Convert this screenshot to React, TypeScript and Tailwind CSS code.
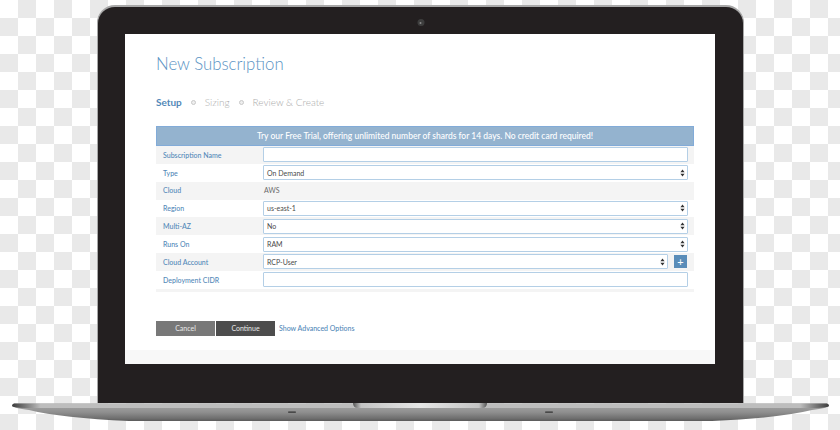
const ROWS = [
  { label: "Subscription Name", kind: "input" },
  { label: "Type", kind: "select", value: "On Demand" },
  { label: "Cloud", kind: "text", value: "AWS" },
  { label: "Region", kind: "select", value: "us-east-1" },
  { label: "Multi-AZ", kind: "select", value: "No" },
  { label: "Runs On", kind: "select", value: "RAM" },
  { label: "Cloud Account", kind: "add", value: "RCP-User" },
  { label: "Deployment CIDR", kind: "input" },
];

function Arrows() {
  return (
    <svg width="5" height="8" viewBox="0 0 5 8" className="shrink-0">
      <path d="M2.5 0.5 L4.6 3.2 H0.4 Z M2.5 7.5 L0.4 4.8 H4.6 Z" fill="#333" />
    </svg>
  );
}

function SelectBox({ value }: { value?: string }) {
  return (
    <div className="flex h-[15px] min-w-0 flex-1 items-center justify-between rounded-[1px] border border-[#b4cfe6] bg-white pl-[3px] pr-[2px] text-[#4a4a4a]">
      <span>{value}</span>
      <Arrows />
    </div>
  );
}

function Row({ row, index }: { row: (typeof ROWS)[number]; index: number }) {
  const even = index % 2 === 0;
  return (
    <div className={`flex h-[17.85px] items-center ${even ? "bg-[#f4f4f4]" : "bg-white"}`}>
      <div className="w-[107px] pl-[7px] text-[7px] font-medium text-[#5288b8]">{row.label}</div>
      <div className="flex w-[425px] items-center text-[7px]">
        {row.kind === "input" && (
          <input className="h-[15px] w-full rounded-[1px] border border-[#b4cfe6] bg-white" aria-label={row.label} />
        )}
        {row.kind === "select" && <SelectBox value={row.value} />}
        {row.kind === "text" && <span className="pl-[1px] text-[#6b6b6b]">{row.value}</span>}
        {row.kind === "add" && (
          <>
            <SelectBox value={row.value} />
            <div className="ml-[6px] mr-[1px] flex h-[13px] w-[13px] shrink-0 items-center justify-center bg-[#5a8db9] text-[11px] leading-none text-white">
              +
            </div>
          </>
        )}
      </div>
    </div>
  );
}

function Base() {
  return (
    <svg width="817" height="18" viewBox="0 0 817 18" className="block">
      <defs>
        <linearGradient id="body" x1="0" y1="0" x2="0" y2="1">
          <stop offset="0" stopColor="#a8a8a8" />
          <stop offset="0.5" stopColor="#8f8f8f" />
          <stop offset="0.85" stopColor="#6f6f6f" />
          <stop offset="1" stopColor="#5a5a5a" />
        </linearGradient>
        <linearGradient id="rim" x1="0" y1="0" x2="1" y2="0">
          <stop offset="0" stopColor="#3c3c3c" />
          <stop offset="0.035" stopColor="#bdbdbd" />
          <stop offset="0.965" stopColor="#bdbdbd" />
          <stop offset="1" stopColor="#3c3c3c" />
        </linearGradient>
        <linearGradient id="notch" x1="0" y1="0" x2="1" y2="0">
          <stop offset="0" stopColor="#555" />
          <stop offset="0.06" stopColor="#c4c4c4" />
          <stop offset="0.5" stopColor="#e6e6e6" />
          <stop offset="0.94" stopColor="#c4c4c4" />
          <stop offset="1" stopColor="#555" />
        </linearGradient>
      </defs>
      <path
        d="M2 0.5 H815 Q817 1 817 3 Q816 5 800 7 Q767 15 700 18 H117 Q50 15 17 7 Q1 5 0 3 Q0 1 2 0.5 Z"
        fill="url(#body)"
      />
      <path d="M2 0.5 H815 Q817 1 817 3 Q816 4.6 804 5 H13 Q1 4.6 0 3 Q0 1 2 0.5 Z" fill="url(#rim)" />
      <path d="M341 0 H475 Q475 5 470 5 H346 Q341 5 341 0 Z" fill="url(#notch)" />
      <rect x="276" y="8.5" width="8" height="1.2" rx="0.6" fill="#333" />
      <rect x="533" y="8.5" width="8" height="1.2" rx="0.6" fill="#333" />
    </svg>
  );
}

export default function App() {
  return (
    <div className="flex h-[430px] w-[840px] flex-col items-center overflow-hidden bg-[conic-gradient(#e9e9e9_25%,#ffffff_0_50%,#e9e9e9_0_75%,#ffffff_0)] bg-[length:36px_36px] pt-[5px] font-['Lato',sans-serif]">
      {/* lid */}
      <div className="relative ml-[1px] h-[398px] w-[647px] rounded-t-[18px] border-x border-t-2 border-[#a8a8a8] border-b-0 bg-[#231f20] px-[27px] pt-[27px]">
        <div className="absolute left-1/2 top-[12px] flex h-[7px] w-[7px] -translate-x-1/2 items-center justify-center rounded-full bg-[#3d3d3d]">
          <div className="h-[2px] w-[2px] rounded-full bg-[#8a8a8a]" />
        </div>

        {/* screen */}
        <div className="flex h-[330px] w-[590px] flex-col bg-white pl-[31px]">
          <h1 className="mt-[20px] h-[20px] text-[16.8px] font-light leading-[20px] text-[#5b93c4]">New Subscription</h1>

          <div className="mt-[21px] flex h-[14px] items-center text-[10px] text-[#adadad]">
            <span className="font-bold text-[#5288b8]">Setup</span>
            <span className="ml-[9px] h-[5px] w-[5px] rounded-full border border-[#c8c8c8] bg-[#eeeeee]" />
            <span className="ml-[9px] font-light">Sizing</span>
            <span className="ml-[9px] h-[5px] w-[5px] rounded-full border border-[#c8c8c8] bg-[#eeeeee]" />
            <span className="ml-[9px] font-light">Review &amp; Create</span>
          </div>

          <div className="mt-[17px] w-[538px]">
            <div className="flex h-[20px] items-center justify-center border border-[#82abd8] bg-[#94b3cf] text-[8.5px] font-medium text-white">
              Try our Free Trial, offering unlimited number of shards for 14 days. No credit card required!
            </div>
            {ROWS.map((row, i) => (
              <Row key={row.label} row={row} index={i} />
            ))}
            <div className="h-[3px] bg-[#f4f4f4]" />
          </div>

          <div className="mt-[29px] flex h-[15px] items-center text-[7px]">
            <button className="h-full w-[59px] bg-[#787878] text-[#e8e8e8]">Cancel</button>
            <button className="ml-[1px] h-full w-[59px] bg-[#4d4d4d] text-[#e8e8e8]">Continue</button>
            <a className="ml-[4px] font-medium text-[#5288b8]">Show Advanced Options</a>
          </div>

          <div className="-ml-[31px] mt-auto h-[14px] bg-[#f8f8f8]" />
        </div>
      </div>

      <Base />
    </div>
  );
}
